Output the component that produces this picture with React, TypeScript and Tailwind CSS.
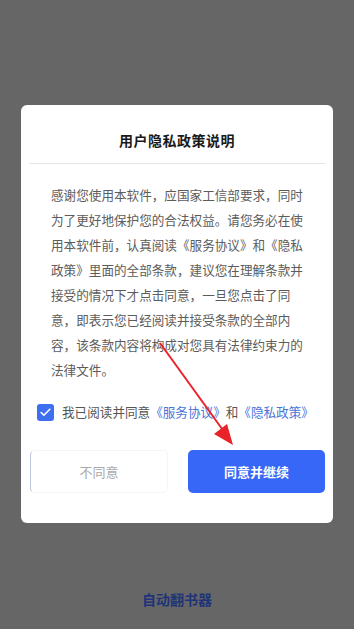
import { Check } from 'lucide-react'

const font = { fontFamily: '"Noto Sans CJK SC", "Noto Sans", sans-serif' }

const App = () => {
  return (
    <div className="relative w-[354px] h-[629px] bg-[#666666] flex flex-col items-center" style={font}>
      {/* 弹窗 */}
      <div className="mt-[105px] w-[312px] h-[418px] bg-white rounded-[6px] flex flex-col">
        <div className="mx-[8px] pt-[25px] pb-[13px] border-b border-[#e6e6e6] flex items-center justify-center">
          <h2 className="text-[14px] leading-[20px] font-bold text-[#1a1a1a] tracking-[0.5px]">用户隐私政策说明</h2>
        </div>

        <p className="px-[30px] pt-[18px] text-[12.6px] leading-[25px] text-[#5c5c5c]">
          感谢您使用本软件，应国家工信部要求，同时为了更好地保护您的合法权益。请您务必在使用本软件前，认真阅读《服务协议》和《隐私政策》里面的全部条款，建议您在理解条款并接受的情况下才点击同意，一旦您点击了同意，即表示您已经阅读并接受条款的全部内容，该条款内容将构成对您具有法律约束力的法律文件。
        </p>

        <div className="flex items-center mt-[21px] ml-[16px]">
          <div className="w-[17px] h-[17px] rounded-[3px] bg-[#3d6ff0] flex items-center justify-center">
            <Check className="w-[13px] h-[13px] text-white" strokeWidth={3} />
          </div>
          <span className="ml-[8px] text-[12.6px] text-[#555555]">
            我已阅读并同意<span className="text-[#4a74d9]">《服务协议》</span>和<span className="text-[#4a74d9]">《隐私政策》</span>
          </span>
        </div>

        <div className="flex gap-[20px] mt-[28px] pl-[9px] pr-[8px]">
          <button className="w-[138px] h-[43px] rounded-[5px] border border-[#f4f5f8] border-l-[#bcc8dc] text-[13px] text-[#aaaaaa] bg-white">
            不同意
          </button>
          <button className="w-[137px] h-[43px] rounded-[5px] bg-[#3767f6] text-[13px] font-bold text-white">
            同意并继续
          </button>
        </div>
      </div>

      <div className="mt-[66px] text-[14px] font-bold text-[#1f3478]">自动翻书器</div>

      {/* 红色箭头 */}
      <svg className="absolute left-0 top-0 pointer-events-none" width="354" height="629">
        <line x1="160" y1="343" x2="225" y2="433" stroke="#e8232a" strokeWidth="2" />
        <polygon points="233,445 214,434 227,424" fill="#e8232a" />
      </svg>
    </div>
  )
}

export default App
